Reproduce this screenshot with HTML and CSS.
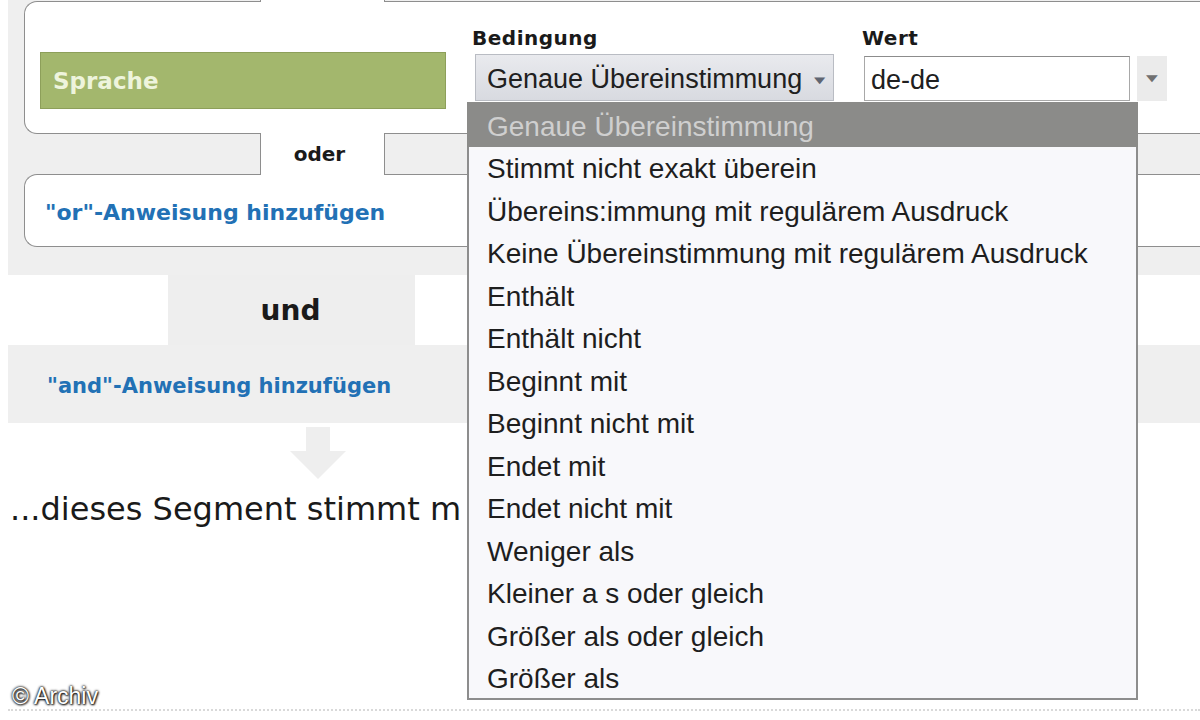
FILE: index.html
```html
<!DOCTYPE html>
<html lang="de">
<head>
<meta charset="utf-8">
<title>Segment</title>
<link rel="stylesheet" href="styles.css">
</head>
<body>
<div class="page">
  <section class="or-section">
    <div class="tab-row top-tab"><div class="tab"></div></div>
    <div class="cond-box">
      <div class="dim">Sprache</div>
      <div class="field cond-field">
        <div class="label">Bedingung</div>
        <div class="select"><span>Genaue Übereinstimmung</span><span class="caret">▼</span></div>
      </div>
      <div class="field value-field">
        <div class="label">Wert</div>
        <div class="value-row">
          <div class="input">de-de</div>
          <div class="combo-btn"><span class="caret">▼</span></div>
        </div>
      </div>
    </div>
    <div class="tab-row"><div class="tab">oder</div></div>
    <div class="add-box"><a class="link">"or"-Anweisung hinzufügen</a></div>
  </section>
  <div class="and-row"><div class="and-tab">und</div></div>
  <section class="and-section"><a class="link">"and"-Anweisung hinzufügen</a></section>
  <div class="arrow">
    <svg width="56" height="52" viewBox="0 0 56 52"><path d="M16 0h24v24h16L28 52 0 24h16z" fill="#eeeeee"/></svg>
  </div>
  <div class="match-text">...dieses Segment stimmt m</div>
  <div class="footer-line"></div>
</div>

<ul class="dropdown">
  <li class="selected">Genaue Übereinstimmung</li>
  <li>Stimmt nicht exakt überein</li>
  <li>Übereins:immung mit regulärem Ausdruck</li>
  <li>Keine Übereinstimmung mit regulärem Ausdruck</li>
  <li>Enthält</li>
  <li>Enthält nicht</li>
  <li>Beginnt mit</li>
  <li>Beginnt nicht mit</li>
  <li>Endet mit</li>
  <li>Endet nicht mit</li>
  <li>Weniger als</li>
  <li>Kleiner a s oder gleich</li>
  <li>Größer als oder gleich</li>
  <li>Größer als</li>
</ul>

<div class="watermark">© Archiv</div>
</body>
</html>
```

FILE: styles.css
```css
* { box-sizing: border-box; }
html, body {
  margin: 0;
  padding: 0;
  width: 1200px;
  height: 720px;
  overflow: hidden;
  background: #ffffff;
  font-family: "Liberation Sans", Arial, sans-serif;
  color: #1c1c1c;
}
body { position: relative; }

.page { width: 1200px; }

.or-section {
  margin-left: 8px;
  background: #efefef;
  padding: 0 0 28px 16px;
}

.tab-row {
  height: 42px;
  position: relative;
  z-index: 1;
  margin: -1px 0;
  padding-left: 236px;
}
.top-tab { height: 2px; margin-top: 0; }
.tab {
  width: 125px;
  height: 100%;
  background: #ffffff;
  border-left: 1px solid #8e8e8e;
  border-right: 1px solid #8e8e8e;
  display: flex;
  align-items: center;
  justify-content: center;
  font-family: "DejaVu Sans", sans-serif;
  font-weight: bold;
  font-size: 20px;
  color: #1a1a1a;
  padding-right: 6px;
}

.cond-box {
  width: 1200px;
  height: 133px;
  background: #ffffff;
  border: 1px solid #8e8e8e;
  border-right: none;
  border-radius: 13px 0 0 13px;
  display: flex;
  align-items: flex-start;
  padding-left: 15px;
}

.dim {
  margin-top: 50px;
  width: 406px;
  height: 57px;
  background: #a3b76d;
  border: 1px solid #8d9f5a;
  display: flex;
  align-items: center;
  padding-left: 12px;
  font-family: "DejaVu Sans", sans-serif;
  font-weight: bold;
  font-size: 23px;
  color: #eef4dc;
}

.field { display: flex; flex-direction: column; }
.label {
  font-family: "DejaVu Sans", sans-serif;
  font-weight: bold;
  font-size: 20px;
  line-height: 24px;
  color: #1a1a1a;
  letter-spacing: 0.5px;
}
.cond-field { margin-left: 26px; padding-top: 24px; }
.value-field { margin-left: 28px; padding-top: 24px; }

.select {
  margin-top: 4px;
  margin-left: 3px;
  width: 359px;
  height: 47px;
  border: 1px solid #b9bcc3;
  background: linear-gradient(#e9eaee, #d8dae0);
  display: flex;
  align-items: center;
  padding: 3px 0 0 11px;
  font-size: 27px;
  color: #202020;
}
.caret {
  font-size: 19px;
  color: #5f6571;
  margin-left: 8px;
  margin-top: 2px;
  display: inline-block;
  transform: scaleY(0.6);
}

.value-row { display: flex; margin-top: 6px; margin-left: 2px; }
.input {
  width: 266px;
  height: 45px;
  background: #ffffff;
  border: 1px solid #a8a8a8;
  border-top-color: #8c8c8c;
  display: flex;
  align-items: center;
  padding: 3px 0 0 6px;
  font-size: 27px;
  color: #202020;
}
.combo-btn {
  margin-left: 7px;
  width: 30px;
  height: 45px;
  background: #ebebeb;
  display: flex;
  align-items: center;
  justify-content: center;
}
.combo-btn .caret { margin: 0; font-size: 20px; color: #707070; }

.add-box {
  width: 1200px;
  height: 73px;
  background: #ffffff;
  border: 1px solid #8e8e8e;
  border-right: none;
  border-radius: 13px 0 0 13px;
  display: flex;
  align-items: center;
  padding-left: 20px;
}

.link {
  font-family: "DejaVu Sans", sans-serif;
  font-weight: bold;
  font-size: 21.5px;
  color: #2271b5;
  text-decoration: none;
  padding-top: 3px;
}
.add-box .link { font-size: 22px; }
.and-section .link { font-size: 21px; }

.and-row {
  height: 70px;
  padding-left: 168px;
}
.and-tab {
  width: 247px;
  height: 70px;
  background: #eeeeee;
  display: flex;
  align-items: center;
  justify-content: center;
  font-family: "DejaVu Sans", sans-serif;
  font-weight: bold;
  font-size: 28px;
  color: #1a1a1a;
  padding-right: 2px;
}

.and-section {
  margin-left: 8px;
  height: 78px;
  background: #efefef;
  display: flex;
  align-items: center;
  padding-left: 39px;
}

.arrow {
  height: 58px;
  padding: 4px 0 0 290px;
}
.arrow svg { display: block; }

.match-text {
  margin-top: 8px;
  padding-left: 10px;
  font-family: "DejaVu Sans", sans-serif;
  font-size: 32px;
  line-height: 40px;
  color: #1a1a1a;
  white-space: nowrap;
}

.footer-line {
  margin: 180px 0 0 8px;
  border-top: 2px dotted #d9d9d9;
}

.dropdown {
  position: absolute;
  left: 467px;
  top: 102px;
  width: 671px;
  height: 598px;
  margin: 0;
  padding: 0;
  list-style: none;
  background: #f8f8fb;
  border: 2px solid #8d8d8d;
  border-top: none;
  z-index: 5;
}
.dropdown li {
  height: 42.5px;
  line-height: 44px;
  padding-left: 18px;
  font-size: 28px;
  color: #1e1e1e;
  white-space: nowrap;
}
.dropdown li.selected {
  height: 45px;
  line-height: 50px;
  background: #8b8b89;
  color: #cfcfcf;
  margin: 0 -2px;
  padding-left: 20px;
}

.watermark {
  position: absolute;
  left: 12px;
  top: 683px;
  font-family: "Liberation Sans", Arial, sans-serif;
  font-size: 23px;
  color: #ffffff;
  text-shadow: 0 0 2px #000, 0 0 3px #000, 1px 1px 2px #333;
  z-index: 6;
}
```
